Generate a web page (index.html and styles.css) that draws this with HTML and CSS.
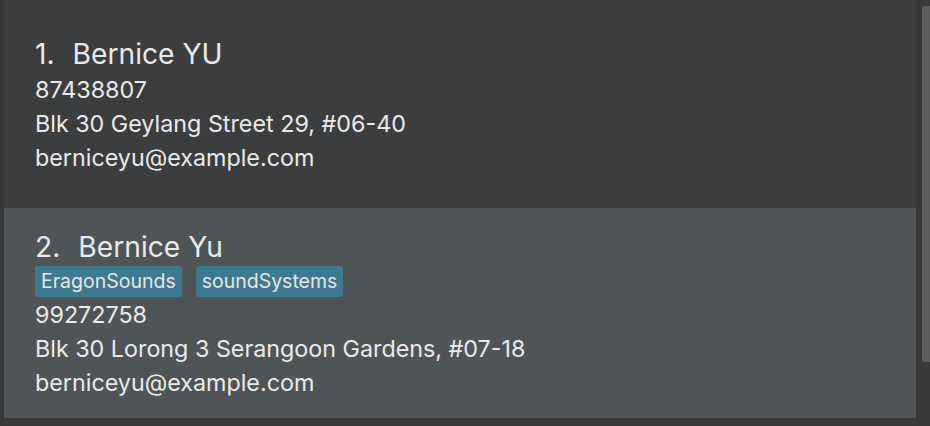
FILE: index.html
```html
<!DOCTYPE html>
<html>
<head>
<meta charset="utf-8">
<link rel="stylesheet" href="styles.css">
</head>
<body>
<div class="app">
  <div class="list">
    <div class="card card-odd">
      <div class="name-row"><span class="idx">1.</span><span class="name">Bernice YU</span></div>
      <div class="line">87438807</div>
      <div class="line">Blk 30 Geylang Street 29, #06-40</div>
      <div class="line">berniceyu@example.com</div>
    </div>
    <div class="card card-even">
      <div class="name-row"><span class="idx">2.</span><span class="name">Bernice Yu</span></div>
      <div class="tags"><span class="tag">EragonSounds</span><span class="tag">soundSystems</span></div>
      <div class="line">99272758</div>
      <div class="line">Blk 30 Lorong 3 Serangoon Gardens, #07-18</div>
      <div class="line">berniceyu@example.com</div>
    </div>
  </div>
  <div class="scrollbar"><div class="thumb"></div></div>
</div>
</body>
</html>
```
FILE: styles.css
```css
html, body {
  margin: 0;
  padding: 0;
  background: #383838;
}
.app {
  display: flex;
  width: 930px;
  height: 426px;
  background: #383838;
  font-family: Inter, "Open Sans", sans-serif;
  color: #eaeaea;
}
.list {
  flex: 1;
  padding-left: 4px;
  display: flex;
  flex-direction: column;
}
.card {
  padding-left: 31px;
  box-sizing: border-box;
}
.card-odd {
  background: #3c3d3f;
  height: 208px;
  padding-top: 35px;
}
.card-even {
  background: #4f5457;
  height: 210px;
  padding-top: 20px;
}
.name-row {
  font-size: 28.2px;
  line-height: 38px;
  display: flex;
}
.idx {
  margin-right: 18px;
}
.line {
  font-size: 23.3px;
  line-height: 34px;
}
.tags {
  display: flex;
  gap: 14px;
  margin: 0 0 1px;
}
.tag {
  background: #3e7a8f;
  color: #e6e6e6;
  border-radius: 3px;
  font-size: 19.5px;
  line-height: 31px;
  padding: 0 6px;
}
.scrollbar {
  width: 14px;
  padding: 6px 0 0 6px;
  box-sizing: border-box;
}
.thumb {
  width: 8px;
  height: 356px;
  background: #5f5f5f;
  border-radius: 4px 0 0 4px;
}
```
